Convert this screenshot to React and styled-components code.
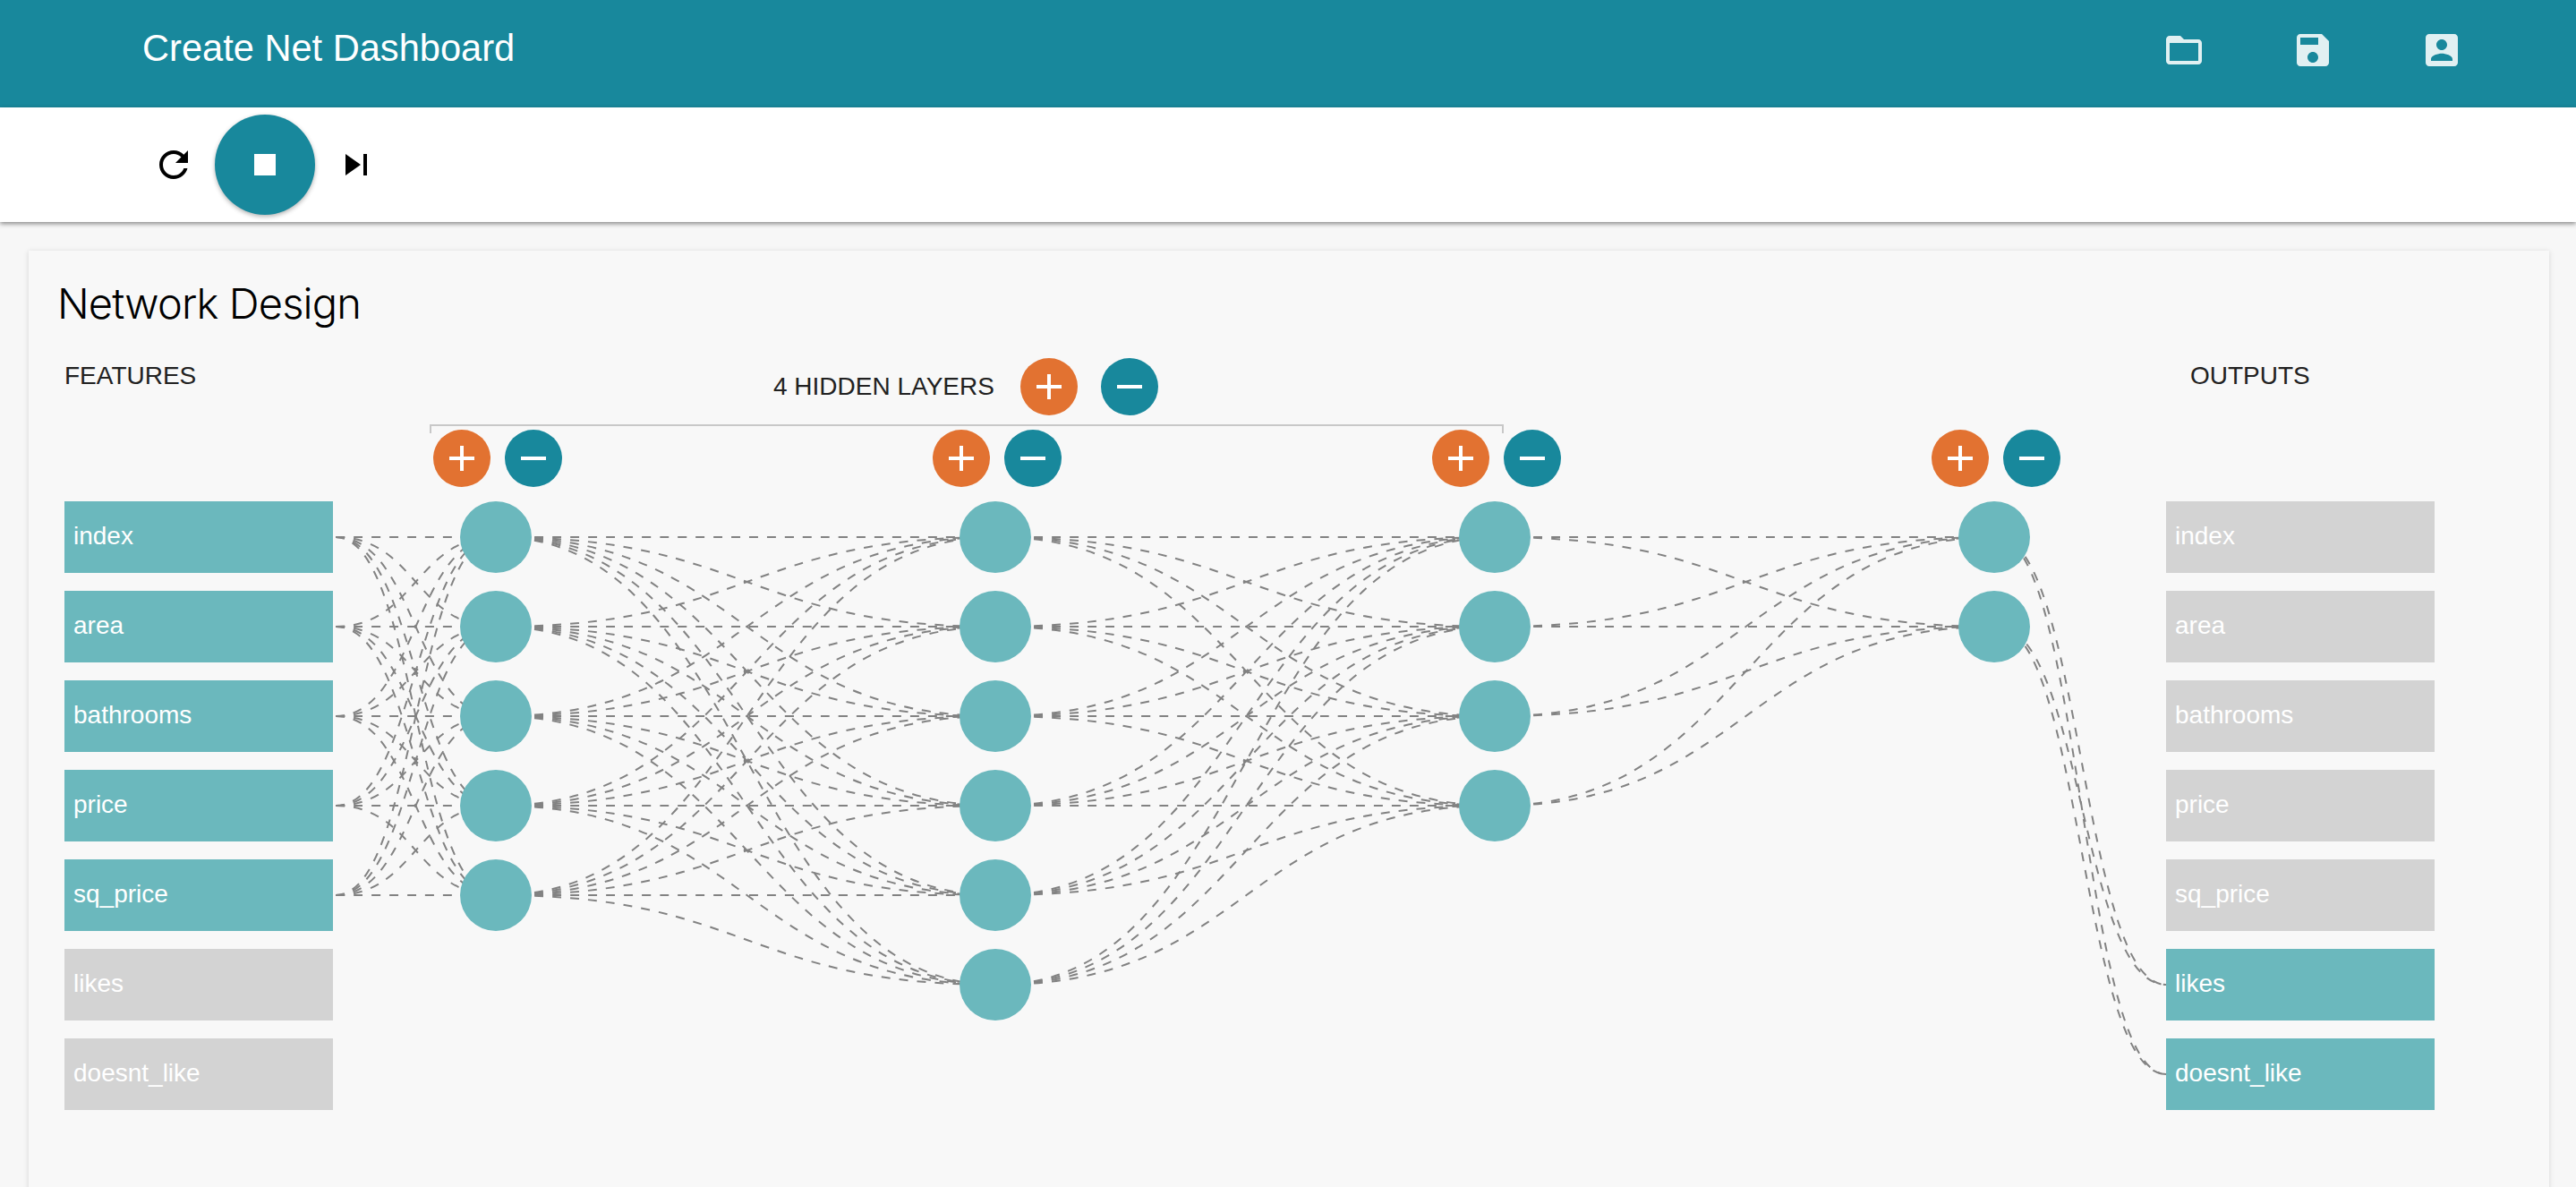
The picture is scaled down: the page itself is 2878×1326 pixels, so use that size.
import React from "react";
import styled, { createGlobalStyle } from "styled-components";

const TEAL = "#18889C";
const ORANGE = "#E27231";
const SOFT = "#6BB8BD";
const MUTED = "#D3D3D3";

const GlobalStyle = createGlobalStyle`
  html, body {
    margin: 0;
    height: 100%;
    overflow: hidden;
    background: #f7f7f7;
    font-family: "Liberation Sans", Arial, sans-serif;
  }
`;

const Page = styled.div`
  height: 100vh;
  overflow: hidden;
  display: flex;
  flex-direction: column;
`;

const Header = styled.header`
  flex: none;
  height: 120px;
  background: ${TEAL};
  display: flex;
  align-items: center;
  justify-content: space-between;
  padding: 0 126px 0 159px;
`;

const AppTitle = styled.h1`
  margin: 0 0 12px;
  font-size: 41.6px;
  font-weight: 400;
  line-height: 48px;
  color: #fff;
`;

const HeaderActions = styled.nav`
  display: flex;
  gap: 96px;
  margin-bottom: 8px;
`;

const Glyph = styled.svg`
  display: block;
  width: 48px;
  height: 48px;
  fill: ${(p) => p.$color || "#000"};
`;

const Toolbar = styled.div`
  flex: none;
  position: relative;
  z-index: 2;
  height: 128px;
  background: #fff;
  display: flex;
  align-items: center;
  gap: 22px;
  padding-left: 170px;
  box-shadow: 0 2px 5px rgba(0, 0, 0, 0.45);
`;

const StopButton = styled.div`
  width: 112px;
  height: 112px;
  border-radius: 50%;
  background: ${TEAL};
  display: flex;
  align-items: center;
  justify-content: center;
  box-shadow: 0 2px 5px rgba(0, 0, 0, 0.3);
`;

const Content = styled.main`
  flex: 1;
  min-height: 0;
  padding: 32px 30px 0 32px;
`;

const Panel = styled.section`
  height: 1200px;
  background: #f8f8f8;
  box-shadow: 0 1px 6px rgba(0, 0, 0, 0.14);
  padding: 0 0 0 32px;
  box-sizing: border-box;
`;

const PanelTitle = styled.h2`
  margin: 0;
  height: 120px;
  padding-top: 27px;
  box-sizing: border-box;
  font-family: "Inter", "Liberation Sans", sans-serif;
  font-size: 47px;
  font-weight: 300;
  line-height: 64px;
  letter-spacing: -0.85px;
  color: #000;
`;

const Diagram = styled.div`
  position: relative;
  margin-left: 8px;
  display: flex;
  align-items: flex-start;
`;

const WireLayer = styled.svg`
  position: absolute;
  left: 0;
  top: 0;
  width: 2720px;
  height: 900px;
  z-index: 0;
`;

const BoxColumn = styled.div`
  position: relative;
  z-index: 1;
  flex: none;
  width: 300px;
  margin-left: ${(p) => p.$offset || 0}px;
`;

const ColumnLabel = styled.div`
  height: 160px;
  padding-left: ${(p) => p.$indent || 0}px;
  box-sizing: border-box;
  font-size: 28px;
  line-height: 40px;
  color: #212121;
`;

const BoxList = styled.div`
  display: flex;
  flex-direction: column;
  gap: 20px;
`;

const DataBox = styled.div`
  height: 80px;
  background: ${(p) => (p.$active ? SOFT : MUTED)};
  color: #fff;
  font-size: 28px;
  line-height: 78px;
  padding-left: 10px;
  box-sizing: border-box;
`;

const LayerArea = styled.div`
  position: relative;
  z-index: 1;
  flex: none;
  width: 1850px;
  margin-left: 112px;
`;

const HiddenHeader = styled.div`
  height: 74px;
  padding-left: 380px;
  box-sizing: border-box;
  display: flex;
  align-items: flex-start;
  gap: 26px;
`;

const HiddenLabel = styled.div`
  width: 250px;
  height: 64px;
  font-size: 28px;
  line-height: 63px;
  color: #212121;
  white-space: nowrap;
`;

const Bracket = styled.div`
  width: 1200px;
  height: 10px;
  margin: 0 0 -4px -4px;
  box-sizing: border-box;
  border: 2px solid #c8c8c8;
  border-bottom: 0;
`;

const LayerRow = styled.div`
  display: flex;
  gap: 414px;
`;

const Layer = styled.div`
  flex: none;
  width: 144px;
`;

const LayerControls = styled.div`
  display: flex;
  gap: 16px;
  margin-bottom: 16px;
`;

const RoundButton = styled.div`
  flex: none;
  position: relative;
  width: 64px;
  height: 64px;
  border-radius: 50%;
  background: ${(p) => (p.$kind === "add" ? ORANGE : TEAL)};
  display: flex;
  align-items: center;
  justify-content: center;
`;

const NodeList = styled.div`
  display: flex;
  flex-direction: column;
  gap: 20px;
  margin-left: 30px;
`;

const Node = styled.div`
  width: 80px;
  height: 80px;
  border-radius: 50%;
  background: ${SOFT};
`;

const Wire = styled.path`
  fill: none;
  stroke: #828282;
  stroke-width: 2;
  stroke-dasharray: 10 10;
`;

const ICONS = {
  folder: "M20 6h-8l-2-2H4c-1.1 0-1.99.9-1.99 2L2 18c0 1.1.9 2 2 2h16c1.1 0 2-.9 2-2V8c0-1.1-.9-2-2-2zm0 12H4V8h16v10z",
  save: "M17 3H5c-1.11 0-2 .9-2 2v14c0 1.1.89 2 2 2h14c1.1 0 2-.9 2-2V7l-4-4zm-5 16c-1.66 0-3-1.34-3-3s1.34-3 3-3 3 1.34 3 3-1.34 3-3 3zm3-10H5V5h10v4z",
  account: "M3 5v14c0 1.1.89 2 2 2h14c1.1 0 2-.9 2-2V5c0-1.1-.9-2-2-2H5c-1.11 0-2 .9-2 2zm12 4c0 1.66-1.34 3-3 3s-3-1.34-3-3 1.34-3 3-3 3 1.34 3 3zm-9 8c0-2 4-3.1 6-3.1s6 1.1 6 3.1v1H6v-1z",
  refresh: "M17.65 6.35C16.2 4.9 14.21 4 12 4c-4.42 0-7.99 3.58-7.99 8s3.57 8 7.99 8c3.73 0 6.84-2.55 7.73-6h-2.08c-.82 2.33-3.04 4-5.65 4-3.31 0-6-2.69-6-6s2.69-6 6-6c1.66 0 3.14.69 4.22 1.78L13 11h7V4l-2.35 2.35z",
  stop: "M6 6h12v12H6z",
  next: "M6 18l8.5-6L6 6v12zM16 6v12h2V6h-2z",
  add: "M19 13h-6v6h-2v-6H5v-2h6V5h2v6h6v2z",
  remove: "M19 13H5v-2h14v2z",
};

const Icon = ({ name, color }) => (
  <Glyph viewBox="0 0 24 24" $color={color}>
    <path d={ICONS[name]} />
  </Glyph>
);

const NAMES = ["index", "area", "bathrooms", "price", "sq_price", "likes", "doesnt_like"];
const LAYER_SIZES = [5, 6, 4, 2];
const LAYER_X = [554, 1112, 1670, 2228];
const rowY = (i) => 600 + i * 100;

const curve = (x0, y0, x1, y1) => {
  const m = (x0 + x1) / 2;
  return `M${x0} ${y0}C${m} ${y0} ${m} ${y1} ${x1} ${y1}`;
};

const buildWires = () => {
  const wires = [];
  for (let f = 0; f < 5; f++)
    for (let n = 0; n < LAYER_SIZES[0]; n++)
      wires.push(curve(375, rowY(f), LAYER_X[0], rowY(n)));
  for (let l = 0; l < 3; l++)
    for (let a = 0; a < LAYER_SIZES[l]; a++)
      for (let b = 0; b < LAYER_SIZES[l + 1]; b++)
        wires.push(curve(LAYER_X[l] + 3, rowY(a), LAYER_X[l + 1], rowY(b)));
  for (let a = 0; a < 2; a++)
    for (let o = 5; o < 7; o++)
      wires.push(curve(LAYER_X[3] + 3, rowY(a), 2420, rowY(o)));
  return wires;
};

const PlusMinus = () => (
  <>
    <RoundButton $kind="add"><Icon name="add" color="#fff" /></RoundButton>
    <RoundButton $kind="remove"><Icon name="remove" color="#fff" /></RoundButton>
  </>
);

export default function App() {
  return (
    <Page>
      <GlobalStyle />
      <Header>
        <AppTitle>Create Net Dashboard</AppTitle>
        <HeaderActions>
          <Icon name="folder" color="rgba(255,255,255,0.87)" />
          <Icon name="save" color="rgba(255,255,255,0.87)" />
          <Icon name="account" color="rgba(255,255,255,0.87)" />
        </HeaderActions>
      </Header>
      <Toolbar>
        <Icon name="refresh" />
        <StopButton><Icon name="stop" color="#fff" /></StopButton>
        <Icon name="next" />
      </Toolbar>
      <Content>
        <Panel>
          <PanelTitle>Network Design</PanelTitle>
          <Diagram>
            <WireLayer viewBox="72 400 2720 900">
              {buildWires().map((d, i) => <Wire key={i} d={d} />)}
            </WireLayer>
            <BoxColumn>
              <ColumnLabel>FEATURES</ColumnLabel>
              <BoxList>
                {NAMES.map((n, i) => <DataBox key={n} $active={i < 5}>{n}</DataBox>)}
              </BoxList>
            </BoxColumn>
            <LayerArea>
              <HiddenHeader>
                <HiddenLabel>4 HIDDEN LAYERS</HiddenLabel>
                <PlusMinus />
              </HiddenHeader>
              <Bracket />
              <LayerRow>
                {LAYER_SIZES.map((count, l) => (
                  <Layer key={l}>
                    <LayerControls><PlusMinus /></LayerControls>
                    <NodeList>
                      {Array.from({ length: count }, (_, i) => <Node key={i} />)}
                    </NodeList>
                  </Layer>
                ))}
              </LayerRow>
            </LayerArea>
            <BoxColumn $offset={86}>
              <ColumnLabel $indent={27}>OUTPUTS</ColumnLabel>
              <BoxList>
                {NAMES.map((n, i) => <DataBox key={n} $active={i >= 5}>{n}</DataBox>)}
              </BoxList>
            </BoxColumn>
          </Diagram>
        </Panel>
      </Content>
    </Page>
  );
}
